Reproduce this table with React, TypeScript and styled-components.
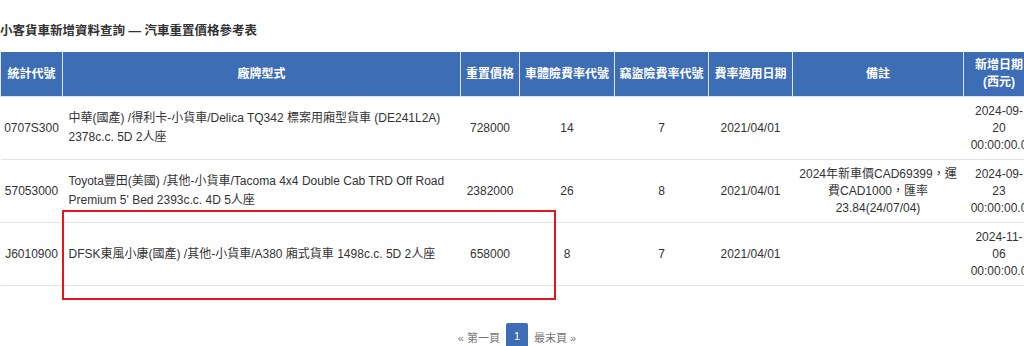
import React from "react";
import styled, { createGlobalStyle } from "styled-components";

const GlobalStyle = createGlobalStyle`
  html, body {
    margin: 0;
    padding: 0;
    background: #fff;
    overflow: hidden;
  }
  body {
    font-family: "Liberation Sans", "Noto Sans CJK TC", sans-serif;
    font-size: 12px;
    line-height: 1.428571;
    color: #333;
  }
`;

const Page = styled.div`
  width: 1034px;
  padding-top: 23px;
`;

const Title = styled.h4`
  margin: 0 0 13px 0;
  font-size: 12.5px;
  font-weight: bold;
  line-height: 16px;
  color: #333;
`;

const TableWrap = styled.div`
  position: relative;
`;

const Table = styled.table`
  width: 1034px;
  table-layout: fixed;
  border-collapse: collapse;
`;

const HeadCell = styled.th`
  background: #3d6db4;
  color: #fff;
  font-weight: bold;
  text-align: center;
  vertical-align: middle;
  padding: 5px 2px;
  height: 34px;
  white-space: nowrap;
  border: 1px solid #dde3ee;
  border-top: none;
`;

const Cell = styled.td<{ $left?: boolean; $tight?: boolean }>`
  text-align: ${(p) => (p.$left ? "left" : "center")};
  vertical-align: middle;
  padding: 5px ${(p) => (p.$left ? "6px" : p.$tight ? "1px" : "5px")};
  height: 52px;
  line-height: ${(p) => (p.$left ? "19px" : "17px")};
  border-bottom: 1px solid #e3e3e3;
  white-space: ${(p) => (p.$tight ? "nowrap" : "normal")};
  word-break: break-word;
`;

const Line = styled.div`
  white-space: nowrap;
`;

const Highlight = styled.div`
  position: absolute;
  left: 62px;
  top: 158px;
  width: 490px;
  height: 86px;
  border: 2px solid #e8141a;
  pointer-events: none;
`;

const Pager = styled.div`
  display: flex;
  justify-content: center;
  align-items: center;
  gap: 4px;
  margin-top: 37px;
  color: #777;
  font-size: 11px;
`;

const PageLink = styled.span`
  padding: 0 2px;
  line-height: 26px;
`;

const PageButton = styled.span`
  display: inline-block;
  width: 22px;
  height: 30px;
  line-height: 26px;
  text-align: center;
  background: #3d6db4;
  color: #fff;
  border-radius: 2px;
`;

const cols = [62, 398, 59, 95, 94, 84, 171, 71];

type Row = {
  code: string;
  model: string;
  price: string;
  body: string;
  theft: string;
  rateDate: string;
  note: string;
  added: string[];
};

const rows: Row[] = [
  {
    code: "0707S300",
    model: "中華(國產) /得利卡-小貨車/Delica TQ342 標案用廂型貨車 (DE241L2A) 2378c.c. 5D 2人座",
    price: "728000",
    body: "14",
    theft: "7",
    rateDate: "2021/04/01",
    note: "",
    added: ["2024-09-", "20", "00:00:00.0"],
  },
  {
    code: "57053000",
    model: "Toyota豐田(美國) /其他-小貨車/Tacoma 4x4 Double Cab TRD Off Road Premium 5' Bed 2393c.c. 4D 5人座",
    price: "2382000",
    body: "26",
    theft: "8",
    rateDate: "2021/04/01",
    note: "2024年新車價CAD69399，運費CAD1000，匯率23.84(24/07/04)",
    added: ["2024-09-", "23", "00:00:00.0"],
  },
  {
    code: "J6010900",
    model: "DFSK東風小康(國產) /其他-小貨車/A380 廂式貨車 1498c.c. 5D 2人座",
    price: "658000",
    body: "8",
    theft: "7",
    rateDate: "2021/04/01",
    note: "",
    added: ["2024-11-", "06", "00:00:00.0"],
  },
];

export default function App() {
  return (
    <Page>
      <GlobalStyle />
      <Title>小客貨車新增資料查詢 — 汽車重置價格參考表</Title>
      <TableWrap>
        <Table>
          <colgroup>
            {cols.map((w, i) => (
              <col key={i} style={{ width: w }} />
            ))}
          </colgroup>
          <thead>
            <tr>
              <HeadCell>統計代號</HeadCell>
              <HeadCell>廠牌型式</HeadCell>
              <HeadCell>重置價格</HeadCell>
              <HeadCell>車體險費率代號</HeadCell>
              <HeadCell>竊盜險費率代號</HeadCell>
              <HeadCell>費率適用日期</HeadCell>
              <HeadCell>備註</HeadCell>
              <HeadCell>
                新增日期
                <br />
                (西元)
              </HeadCell>
            </tr>
          </thead>
          <tbody>
            {rows.map((r) => (
              <tr key={r.code}>
                <Cell $tight>{r.code}</Cell>
                <Cell $left>{r.model}</Cell>
                <Cell>{r.price}</Cell>
                <Cell>{r.body}</Cell>
                <Cell>{r.theft}</Cell>
                <Cell>{r.rateDate}</Cell>
                <Cell>{r.note}</Cell>
                <Cell>
                  {r.added.map((l, i) => (
                    <Line key={i}>{l}</Line>
                  ))}
                </Cell>
              </tr>
            ))}
          </tbody>
        </Table>
        <Highlight />
      </TableWrap>
      <Pager>
        <PageLink>« 第一頁</PageLink>
        <PageButton>1</PageButton>
        <PageLink>最末頁 »</PageLink>
      </Pager>
    </Page>
  );
}
